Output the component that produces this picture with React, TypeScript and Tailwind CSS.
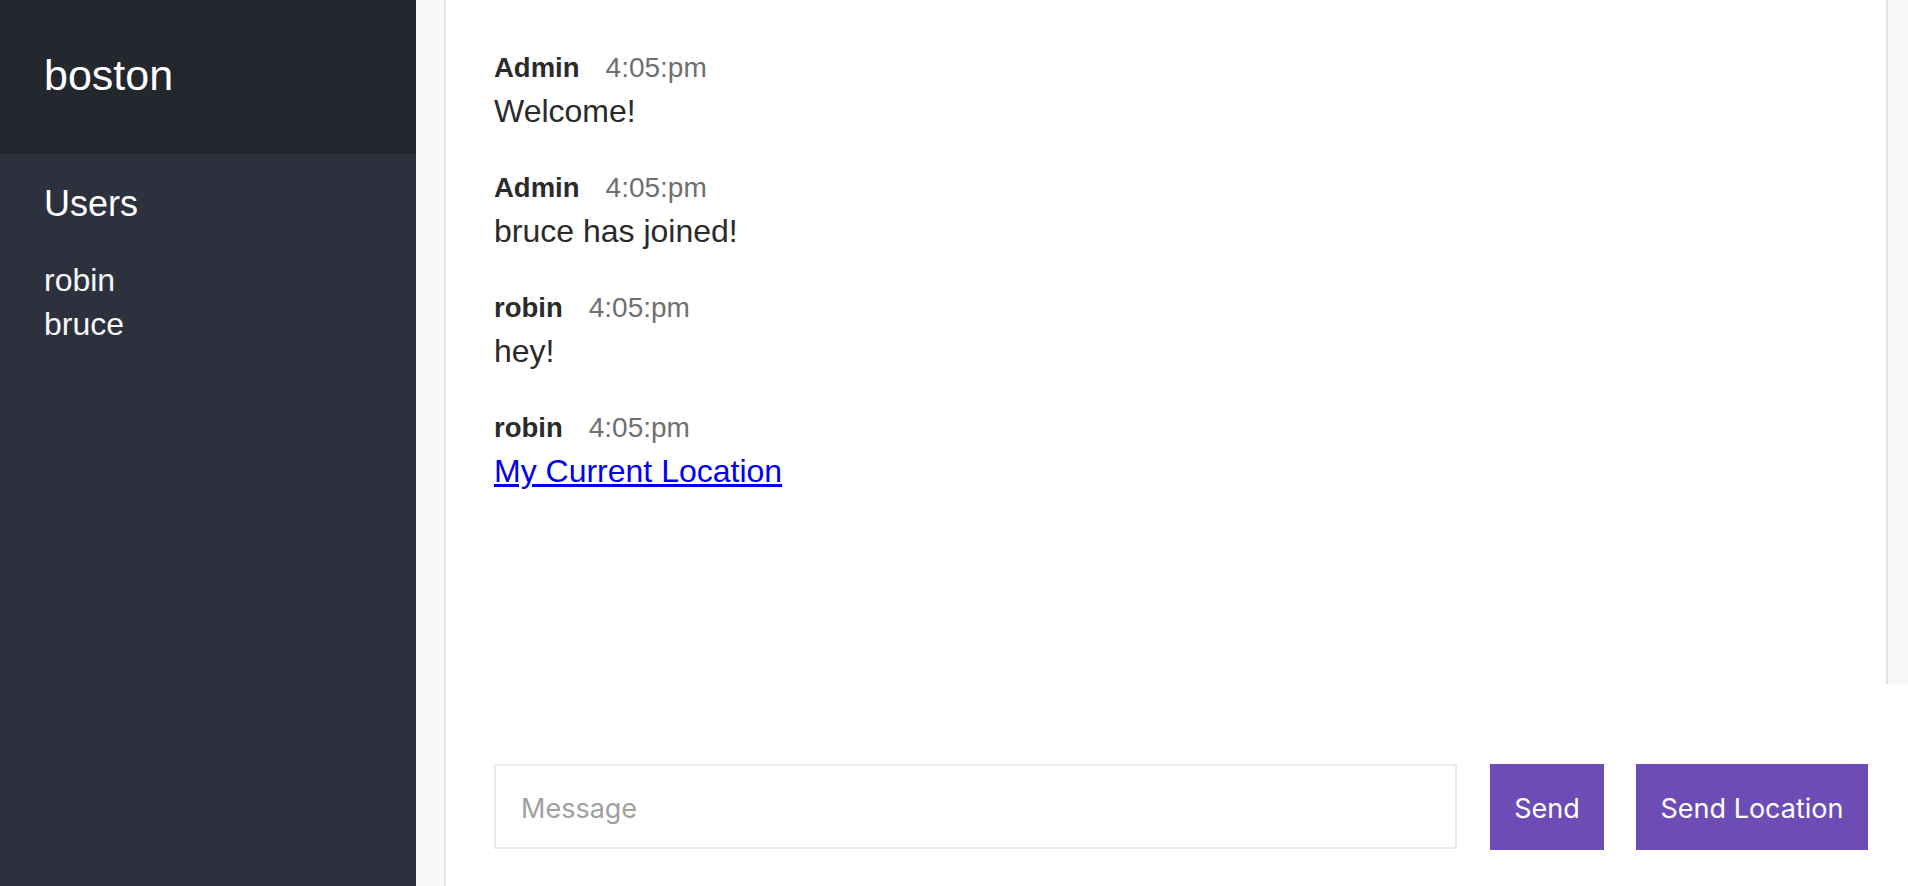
import React from "react";

type Msg = { name: string; time: string; text?: string; link?: string };

const messages: Msg[] = [
  { name: "Admin", time: "4:05:pm", text: "Welcome!" },
  { name: "Admin", time: "4:05:pm", text: "bruce has joined!" },
  { name: "robin", time: "4:05:pm", text: "hey!" },
  { name: "robin", time: "4:05:pm", link: "My Current Location" },
];

export default function App() {
  return (
    <div className="flex h-[886px] w-full overflow-hidden bg-white font-['Liberation_Sans',Arial,sans-serif]">
      {/* Sidebar */}
      <aside className="flex h-full w-[446px] shrink-0">
        <div className="flex h-full w-[416px] flex-col bg-[#2d303d] text-white">
          <div className="h-[154px] shrink-0 bg-[#25272f] px-[44px] pt-[50px]">
            <h2 className="text-[43px] leading-[50px] font-normal">boston</h2>
          </div>
          <div className="px-[44px] pt-[29px]">
            <h3 className="text-[36px] leading-[42px] font-normal">Users</h3>
            <ul className="mt-[33px] text-[32px] leading-[44px] text-[#f7f7f7]">
              <li>robin</li>
              <li>bruce</li>
            </ul>
          </div>
        </div>
        <div className="h-full w-[30px] border-r-2 border-[#e6e6e6] bg-[#f8f8f8]" />
      </aside>

      {/* Main */}
      <main className="flex h-full min-w-0 flex-1 flex-col">
        <div className="flex h-[684px] shrink-0">
          <div className="flex-1 pl-[48px] pt-[48px] text-[#2a2a2a]">
            {messages.map((m, i) => (
              <div key={i} className="mb-[36px]">
                <p className="flex items-baseline leading-[40px]">
                  <span className="mr-[26px] text-[27.5px] font-bold text-[#2b2b2b]">{m.name}</span>
                  <span className="text-[28px] text-[#6f6f6f]">{m.time}</span>
                </p>
                <p className="mt-[2px] text-[32px] leading-[42px]">
                  {m.link ? (
                    <a href="#" className="text-[#0000ee] underline">
                      {m.link}
                    </a>
                  ) : (
                    m.text
                  )}
                </p>
              </div>
            ))}
          </div>
          <div className="h-full w-[22px] border-l-2 border-[#e2e2e2] bg-[#f8f8f8]" />
        </div>

        <div className="flex items-start pl-[48px] pr-[40px] pt-[80px]">
          <input
            placeholder="Message"
            className="mr-[33px] h-[85px] min-w-0 flex-1 border-2 border-[#ebebeb] bg-white px-[25px] pt-[4px] font-['Inter',sans-serif] text-[27px] text-[#333] outline-none placeholder:text-[#a0a0a0]"
          />
          <button className="mr-[32px] h-[86px] w-[114px] shrink-0 bg-[#6d4db5] pt-[4px] font-['Inter',sans-serif] text-[27px] text-white">
            Send
          </button>
          <button className="h-[86px] w-[232px] shrink-0 bg-[#6d4db5] pt-[4px] font-['Inter',sans-serif] text-[27px] text-white">
            Send Location
          </button>
        </div>
      </main>
    </div>
  );
}
